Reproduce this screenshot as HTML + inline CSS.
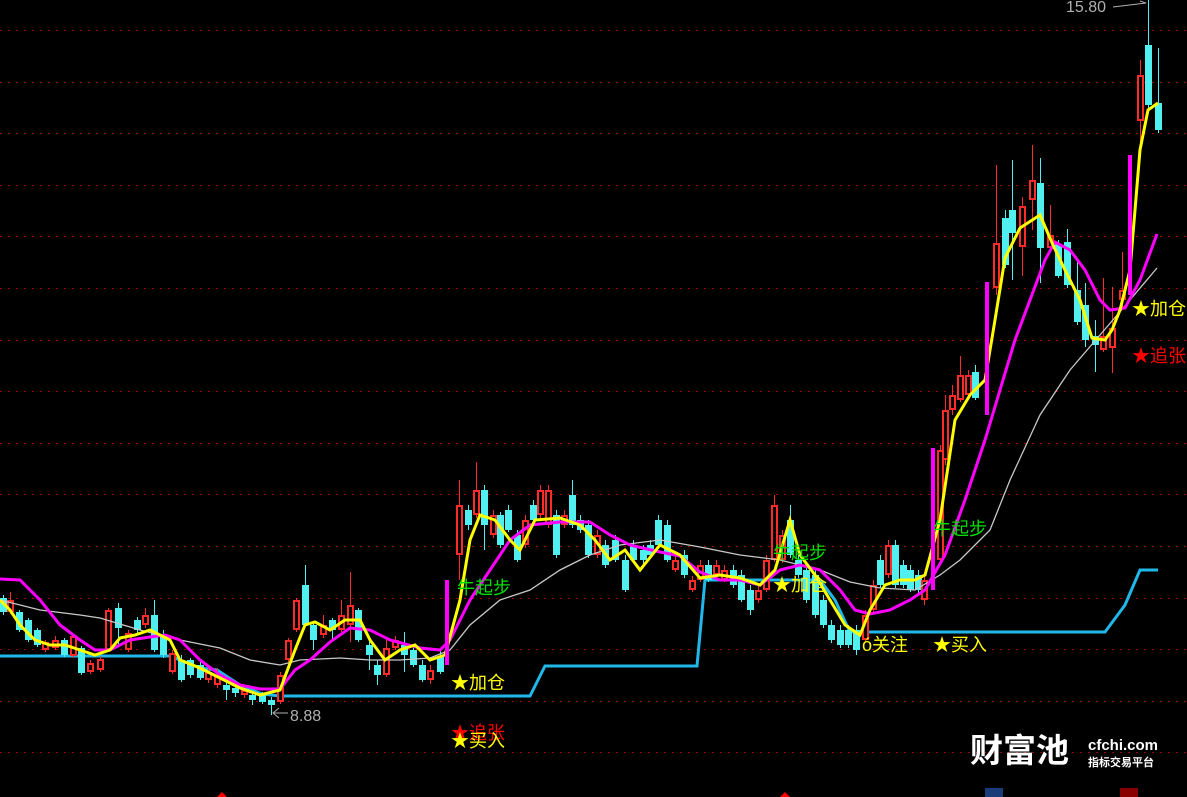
<!DOCTYPE html>
<html><head><meta charset="utf-8">
<style>
html,body{margin:0;padding:0;background:#000;width:1187px;height:797px;overflow:hidden}
svg{display:block}
.t{font-family:"Liberation Sans","Noto Sans CJK SC",sans-serif;font-size:17px}
</style></head><body>
<svg id="s" width="1187" height="797" viewBox="0 0 1187 797" xmlns="http://www.w3.org/2000/svg">
<g id="grid" stroke="#a00000" stroke-width="1" stroke-dasharray="2,6"></g>
<g id="cyanline"><polyline fill="none" stroke="#1fb8e8" stroke-width="3" points="0,656 170,656 185,662 200,668 217,670 240,685 262,694 280,696 530,696 545,666 697,666 705,580 820,580 835,600 850,632 1105,632 1125,605 1140,570 1158,570"/></g>
<g id="candles" shape-rendering="crispEdges"></g>
<polyline fill="none" stroke="#c8c8c8" stroke-width="1.3" points="0,600 40,610 80,615 100,618 140,630 180,640 220,648 250,660 280,665 300,660 340,658 370,660 400,660 430,658 450,650 470,625 500,600 530,590 560,570 590,555 620,545 660,540 700,547 740,555 780,560 820,570 850,582 880,588 915,590 940,575 960,560 990,530 1010,480 1040,415 1070,370 1100,335 1130,300 1157,268"/>
<polyline fill="none" stroke="#ff00ff" stroke-width="3" points="0,579 20,580 40,600 60,625 80,640 95,650 110,650 130,640 150,637 165,635 180,640 200,660 220,675 240,685 260,689 280,689 295,670 310,660 330,642 350,628 370,630 390,640 420,648 440,650 450,640 470,600 490,570 510,540 530,525 560,522 590,522 610,535 630,545 660,552 680,556 700,572 720,580 740,580 760,585 780,570 800,565 820,570 840,590 855,610 870,614 890,610 910,600 925,590 945,555 965,500 985,440 1000,390 1015,340 1030,300 1045,260 1055,242 1070,250 1085,270 1100,300 1110,310 1125,308 1140,280 1157,234"/>
<polyline fill="none" stroke="#ffff00" stroke-width="3" points="0,600 10,610 20,625 35,640 50,645 65,645 80,650 95,655 110,650 120,638 135,635 150,630 170,640 180,660 200,668 220,678 240,688 260,695 280,690 295,650 305,625 315,622 330,630 345,620 360,620 370,640 385,660 400,650 415,645 430,660 445,655 460,600 470,540 480,515 495,520 510,540 520,550 535,520 560,518 580,525 595,540 610,560 625,550 640,570 660,545 680,555 700,578 720,575 740,578 760,585 775,570 790,520 800,555 815,575 830,600 845,625 860,635 870,610 885,585 900,580 915,580 925,575 940,520 955,420 970,395 985,380 995,320 1005,258 1020,228 1040,215 1053,245 1065,270 1080,300 1092,338 1105,340 1112,330 1120,310 1130,270 1140,150 1148,110 1158,103"/>
<g fill="#ff00ff"><rect x="445" y="580" width="4" height="85"/><rect x="931" y="448" width="4" height="142"/><rect x="985" y="282" width="4" height="133"/><rect x="1128" y="155" width="4" height="140"/></g>
<g class="t">
<text x="1066" y="12" fill="#b0b0b0" font-size="16">15.80</text>
<polyline points="1113,7 1146,3 1140,1 M1146,3" stroke="#b0b0b0" fill="none"/>
<text x="290" y="721" fill="#b0b0b0" font-size="16">8.88</text>
<polyline points="279,708 273,713 279,718 M273,713" stroke="#b0b0b0" fill="none"/>
<line x1="273" y1="713" x2="288" y2="713" stroke="#b0b0b0"/>
<text x="1132" y="315" fill="#ffff00" font-size="18">★加仓</text>
<text x="1132" y="362" fill="#ff0000" font-size="18">★追张</text>
<text x="933" y="535" fill="#00e000" font-size="18">牛起步</text>
<text x="773" y="559" fill="#00e000" font-size="18">牛起步</text>
<text x="457" y="594" fill="#00e000" font-size="18">牛起步</text>
<text x="773" y="591" fill="#ffff00" font-size="18">★加仓</text>
<text x="451" y="689" fill="#ffff00" font-size="18">★加仓</text>
<text x="862" y="651" fill="#ffff00" font-size="18">ó关注</text>
<text x="933" y="651" fill="#ffff00" font-size="18">★买入</text>
<text x="451" y="739" fill="#ff0000" font-size="18">★追张</text>
<text x="451" y="747" fill="#ffff00" font-size="18">★买入</text>
</g>
<polygon points="217,797 222,792 227,797" fill="#ff0000"/>
<polygon points="780,797 785,792 790,797" fill="#ff0000"/>
<rect x="985" y="788" width="18" height="9" fill="#1a3d7a"/>
<rect x="1120" y="788" width="18" height="9" fill="#8a0000"/>
<text x="970" y="762" fill="#fff" font-family="Noto Sans CJK SC,sans-serif" font-size="33" font-weight="bold">财富池</text>
<text x="1088" y="750" fill="#fff" font-family="Liberation Sans,sans-serif" font-size="15" font-weight="bold">cfchi.com</text>
<text x="1088" y="766" fill="#fff" font-family="Noto Sans CJK SC,sans-serif" font-size="11" font-weight="bold">指标交易平台</text>
</svg>
<script>
var g=document.getElementById('grid'),h='';
for(var k=0;k<15;k++){var y=Math.round(30+51.6*k)+0.5;h+='<line x1="0" y1="'+y+'" x2="1187" y2="'+y+'"/>';}
g.innerHTML=h;
var C=[[3,598,612,595,615,0],[10,600,612,592,614,1],[19,612,630,610,632,0],[28,620,640,618,642,0],[37,630,645,628,647,0],[45,642,650,640,652,1],[55,640,648,636,650,1],[64,640,655,638,657,0],[73,636,656,635,658,1],[81,648,673,646,675,0],[90,663,672,660,674,1],[100,659,670,656,672,1],[108,610,650,608,652,1],[118,608,628,603,645,0],[128,633,650,630,652,1],[137,620,630,617,635,0],[145,615,625,608,628,1],[154,615,650,600,652,0],[163,634,655,630,658,0],[172,653,672,650,674,1],[181,660,680,655,682,0],[190,660,675,658,678,0],[200,665,678,662,680,0],[208,672,680,668,683,1],[217,675,685,668,688,1],[226,685,690,682,700,0],[235,688,693,685,697,0],[244,690,695,687,698,1],[252,695,700,692,705,0],[262,695,702,692,704,0],[271,700,705,697,715,0],[280,675,702,672,704,1],[288,640,660,638,662,1],[296,600,630,598,632,1],[305,585,625,565,627,0],[313,625,640,622,650,0],[323,625,635,615,638,1],[332,620,630,618,640,0],[341,615,630,600,632,1],[350,605,625,572,642,1],[358,610,640,608,642,0],[369,645,655,640,670,0],[377,665,675,660,685,0],[386,648,675,640,677,1],[395,640,648,636,650,1],[404,645,655,632,672,0],[413,650,665,645,667,0],[422,665,680,660,682,0],[430,670,680,665,684,1],[440,657,672,650,674,0],
[459,505,555,480,580,1],[468,510,525,505,530,0],[476,490,515,462,518,1],[484,490,525,485,550,0],[493,515,535,510,538,1],[500,515,545,512,548,0],[508,510,530,505,532,0],[517,535,560,530,562,0],[525,520,545,515,548,1],[533,505,520,500,525,0],[540,490,515,485,518,1],[548,490,525,485,528,1],[556,515,555,510,558,0],[564,515,525,510,528,1],[572,495,525,480,528,0],[580,520,530,515,533,0],[588,525,555,520,558,0],[597,535,555,530,558,1],[605,545,565,540,568,0],[615,540,560,535,562,0],[625,560,590,555,592,0],[633,545,560,540,562,0],[643,550,560,545,565,0],[650,545,555,540,558,0],[658,520,545,515,548,0],[667,525,560,520,562,0],[675,560,570,555,572,1],[684,555,575,550,578,0],[692,580,590,576,592,1],[700,565,580,560,582,1],[708,565,580,560,582,0],[716,565,575,560,578,1],[724,570,580,565,582,1],[733,570,585,565,588,0],[741,575,600,570,602,0],[750,590,610,585,615,0],[758,590,600,585,603,1],[766,560,590,555,592,1],[774,505,560,495,562,1],[782,535,560,530,563,1],[790,520,555,505,558,0],[798,560,575,555,578,0],[806,570,600,565,603,0],[815,575,615,570,618,0],[823,600,625,595,628,0],[831,625,640,620,643,0],[840,630,645,625,648,0],[848,630,645,625,648,0],[856,630,650,625,655,0],[865,615,640,610,643,1],[873,585,610,580,612,1],[880,560,585,555,588,0],[888,545,575,540,578,1],[895,545,585,540,588,0],[903,565,585,560,588,0],[910,570,590,565,592,0],[918,575,590,570,593,0],[924,580,600,575,605,1],
[940,450,560,445,565,1],[945,410,460,395,465,1],[952,395,410,385,415,1],[960,375,400,356,402,1],[968,375,395,370,398,1],[975,372,398,365,400,0],
[996,243,288,165,295,1],[1005,218,265,210,268,0],[1012,210,233,160,280,0],[1022,206,247,197,276,1],[1032,180,200,145,230,1],[1040,183,248,158,283,0],[1050,235,248,205,252,1],[1058,244,276,240,278,0],[1067,242,285,229,288,0],[1077,290,322,262,325,0],[1085,305,340,283,347,0],[1095,336,345,320,372,0],[1103,336,350,278,352,1],[1112,328,348,287,373,1],[1122,290,300,252,310,1],[1140,75,121,60,142,1],[1148,45,105,0,110,0],[1158,103,130,48,133,0]];
var s='';
C.forEach(function(c){var x=c[0],col=c[5]?'#ff2a2a':'#50f0f0';
s+='<rect x="'+x+'" y="'+c[3]+'" width="1" height="'+(c[4]-c[3])+'" fill="'+col+'"/>';
if(c[5]){s+='<rect x="'+(x-3)+'" y="'+c[1]+'" width="7" height="'+(c[2]-c[1])+'" fill="'+col+'"/>';
s+='<rect x="'+(x-1)+'" y="'+(c[1]+2)+'" width="3" height="'+Math.max(0,c[2]-c[1]-4)+'" fill="#000"/>';}
else s+='<rect x="'+(x-3)+'" y="'+c[1]+'" width="7" height="'+(c[2]-c[1])+'" fill="'+col+'"/>';});
document.getElementById('candles').innerHTML=s;
</script>
</body></html>
